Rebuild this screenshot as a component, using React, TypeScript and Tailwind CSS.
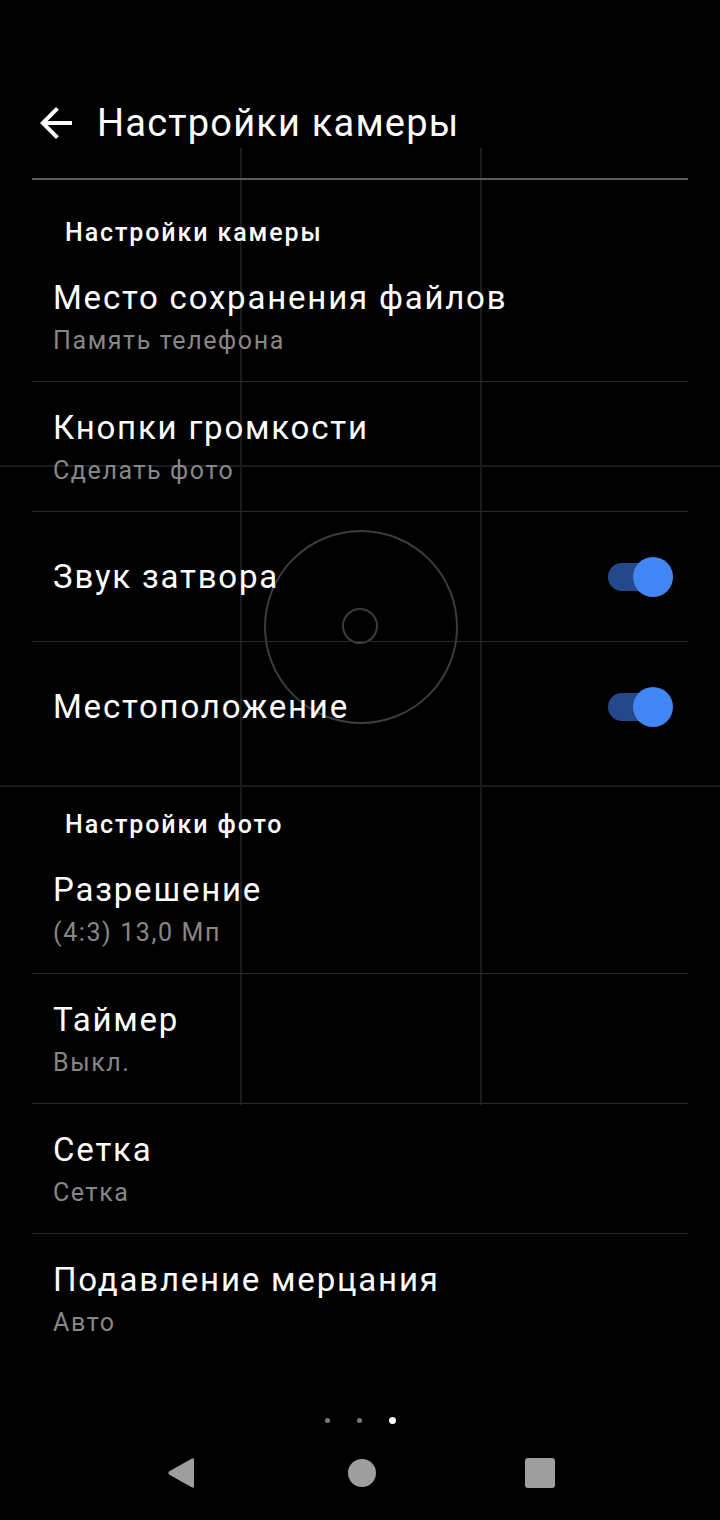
import React from "react";

type Row = { title: string; sub?: string; toggle?: boolean; last?: boolean };

const camera: Row[] = [
  { title: "Место сохранения файлов", sub: "Память телефона" },
  { title: "Кнопки громкости", sub: "Сделать фото" },
  { title: "Звук затвора", toggle: true },
  { title: "Местоположение", toggle: true, last: true },
];

const photo: Row[] = [
  { title: "Разрешение", sub: "(4:3) 13,0 Мп" },
  { title: "Таймер", sub: "Выкл." },
  { title: "Сетка", sub: "Сетка" },
  { title: "Подавление мерцания", sub: "Авто", last: true },
];

function Toggle() {
  return (
    <div className="relative mr-[15px] h-[40px] w-[65px] shrink-0">
      <div className="absolute left-0 top-[6px] h-[28px] w-[52px] rounded-full bg-[#25488a]" />
      <div className="absolute right-0 top-0 h-[40px] w-[40px] rounded-full bg-[#4285f4]" />
    </div>
  );
}

function SettingRow({ row }: { row: Row }) {
  if (row.toggle) {
    return (
      <div
        className={`flex h-[130px] items-center justify-between pl-[21px] ${
          row.last ? "" : "border-b border-[#2a2a2a]"
        }`}
      >
        <span className="text-[33px] leading-[40px] tracking-[1.8px] text-white">{row.title}</span>
        <Toggle />
      </div>
    );
  }
  return (
    <div
      className={`h-[130px] pl-[21px] pt-[26px] ${row.last ? "" : "border-b border-[#2a2a2a]"}`}
    >
      <div className="text-[33px] leading-[40px] tracking-[1.8px] text-white">{row.title}</div>
      <div className="mt-[8px] text-[25px] leading-[30px] tracking-[1.6px] text-[#878787]">
        {row.sub}
      </div>
    </div>
  );
}

function SectionTitle({ text }: { text: string }) {
  return (
    <div className="h-[72px] pl-[33px] pt-[39px] text-[25px] font-medium leading-[28px] tracking-[1.9px] text-white">
      {text}
    </div>
  );
}

export default function App() {
  return (
    <div
      className="relative h-[1520px] w-[720px] overflow-hidden bg-black"
      style={{ fontFamily: "Roboto, 'Noto Sans', sans-serif" }}
    >
      {/* сетка камеры поверх превью */}
      <div className="pointer-events-none absolute left-[240px] top-[148px] h-[957px] w-[2px] bg-[#1c1c1c]" />
      <div className="pointer-events-none absolute left-[480px] top-[148px] h-[957px] w-[2px] bg-[#1c1c1c]" />
      <div className="pointer-events-none absolute left-0 top-[465px] h-[2px] w-[720px] bg-[#1c1c1c]" />
      <div className="pointer-events-none absolute left-0 top-[785px] h-[2px] w-[720px] bg-[#1c1c1c]" />
      <div className="pointer-events-none absolute left-[264px] top-[530px] h-[194px] w-[194px] rounded-full border-2 border-[#3c3c3c]" />
      <div className="pointer-events-none absolute left-[342px] top-[608px] h-[36px] w-[36px] rounded-full border-2 border-[#3c3c3c]" />

      <div className="relative">
        {/* шапка */}
        <div className="flex h-[178px] items-start pt-[99px]">
          <svg className="ml-[32px] h-[48px] w-[48px]" viewBox="0 0 24 24" fill="#ffffff">
            <path d="M20 11H7.83l5.59-5.59L12 4l-8 8 8 8 1.41-1.41L7.83 13H20v-2z" />
          </svg>
          <span className="ml-[17px] mt-[1px] text-[38px] leading-[46px] tracking-[1.2px] text-white">
            Настройки камеры
          </span>
        </div>
        <div className="mx-[32px] h-[2px] bg-[#5a5a5a]" />

        <div className="mx-[32px]">
          <SectionTitle text="Настройки камеры" />
          {camera.map((r) => (
            <SettingRow key={r.title} row={r} />
          ))}
          <SectionTitle text="Настройки фото" />
          {photo.map((r) => (
            <SettingRow key={r.title} row={r} />
          ))}
        </div>

        {/* индикатор страниц */}
        <div className="mt-[53px] flex items-center justify-center gap-[27px]">
          <div className="h-[5px] w-[5px] rounded-full bg-[#7a7a7a]" />
          <div className="h-[5px] w-[5px] rounded-full bg-[#7a7a7a]" />
          <div className="h-[7px] w-[7px] rounded-full bg-white" />
        </div>

        {/* навигация */}
        <div className="mt-[31px] flex h-[36px] items-center justify-center">
          <svg className="h-[34px] w-[30px]" viewBox="0 0 30 34">
            <path
              d="M26 2.5 Q28 1.5 28 4 L28 30 Q28 32.5 26 31.5 L3 18.5 Q1.5 17 3 15.5 Z"
              fill="#9e9e9e"
            />
          </svg>
          <div className="ml-[152px] h-[28px] w-[28px] rounded-full bg-[#9e9e9e]" />
          <div className="ml-[149px] h-[30px] w-[30px] rounded-[3px] bg-[#9e9e9e]" />
        </div>
      </div>
    </div>
  );
}
